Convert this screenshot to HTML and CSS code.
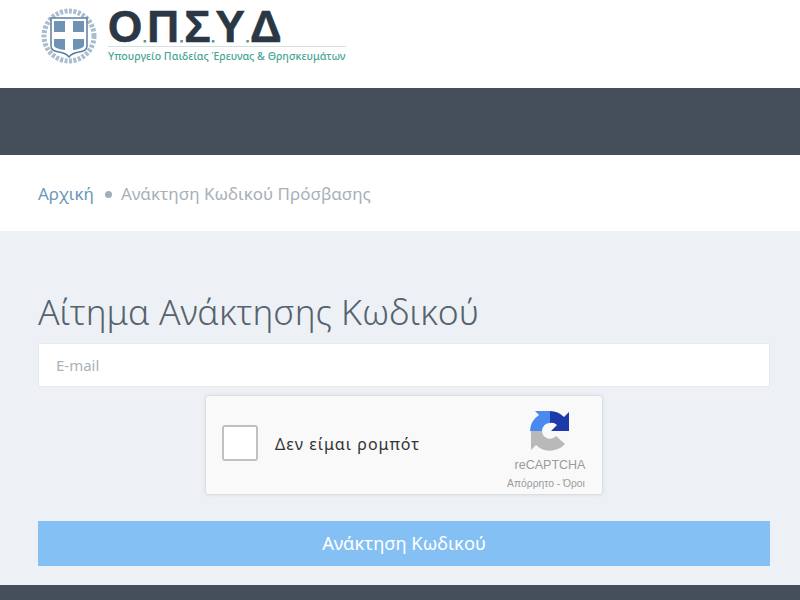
FILE: index.html
```html
<!DOCTYPE html>
<html lang="el">
<head>
    <meta charset="UTF-8">
    <meta name="viewport" content="width=device-width, initial-scale=1.0">
    <title>Ανάκτηση Κωδικού</title>
    <link rel="stylesheet" href="styles.css">
</head>
<body>
    <header class="site-header">
        <svg class="emblem" width="58" height="60" viewBox="0 0 58 60">
            <circle cx="29" cy="30" r="25" fill="none" stroke="#a9bdcf" stroke-width="5" stroke-dasharray="3 1.5"/>
            <path d="M11 12H47V40Q47 45 39 46Q32 47 29 51Q26 47 19 46Q11 45 11 40Z" fill="#fff" stroke="#5d7f9f" stroke-width="1.5"/>
            <path d="M14 15H25V26H14ZM33 15H44V26H33ZM14 33H25V44Q16 43 14 40ZM33 33H44V40Q42 43 33 44Z" fill="#6f93b5"/>
        </svg>
        <div class="brand">
            <div class="brand-name">Ο<i>.</i>Π<i>.</i>Σ<i>.</i>Υ<i>.</i>Δ</div>
            <div class="brand-sub">Υπουργείο Παιδείας Έρευνας &amp; Θρησκευμάτων</div>
        </div>
    </header>
    <div class="nav-bar"></div>
    <nav class="breadcrumb">
        <a href="#">Αρχική</a>
        <span class="dot"></span>
        <span class="current">Ανάκτηση Κωδικού Πρόσβασης</span>
    </nav>
    <main class="content">
        <h1>Αίτημα Ανάκτησης Κωδικού</h1>
        <form class="recover-form">
            <input type="text" placeholder="E-mail">
            <div class="captcha">
                <div class="captcha-box"></div>
                <div class="captcha-label">Δεν είμαι ρομπότ</div>
                <div class="captcha-logo">
                    <svg width="42" height="42" viewBox="0 0 42 42">
                        <path d="M1 21A20 20 0 0 1 10 5L6 1H21V13A8 8 0 0 0 13 21Z" fill="#4a8af0"/>
                        <path d="M21 1A20 20 0 0 1 35 7L40 2V21H22L28 15A8 8 0 0 0 21 13Z" fill="#1c3aa9"/>
                        <path d="M1 21H13A8 8 0 0 0 27 26L36 34A20 20 0 0 1 7 35L2 40V21Z" fill="#b9b9b9"/>
                    </svg>
                    <div class="captcha-name">reCAPTCHA</div>
                    <div class="captcha-terms">Απόρρητο - Όροι</div>
                </div>
            </div>
            <button type="submit">Ανάκτηση Κωδικού</button>
        </form>
    </main>
    <footer class="site-footer"></footer>
</body>
</html>
```

FILE: styles.css
```css
body {
    font-family: "Noto Sans", "Open Sans", sans-serif;
    margin: 0;
    background-color: #edf1f5;
    overflow: hidden;
}
.site-header {
    height: 88px;
    background-color: #fff;
    display: flex;
    align-items: flex-start;
    padding-left: 40px;
    box-sizing: border-box;
}
.emblem {
    margin-top: 6px;
}
.brand {
    margin-left: 10px;
    width: 238px;
}
.brand-name {
    font-family: "Liberation Sans", sans-serif;
    font-size: 44px;
    font-weight: bold;
    line-height: 38px;
    margin-top: 8px;
    color: #2a3744;
    -webkit-text-stroke: 0.6px #2a3744;
    white-space: nowrap;
    border-bottom: 1px solid #d5e0e0;
    height: 38px;
}
.brand-name i {
    font-style: normal;
    font-size: 11px;
    color: #3f9c8e;
    -webkit-text-stroke: 0.8px #3f9c8e;
    margin: 0 1px;
}
.brand-sub {
    font-size: 10.6px;
    font-weight: 500;
    line-height: 14px;
    margin-top: 2px;
    color: #4aa597;
    white-space: nowrap;
}
.nav-bar {
    height: 67px;
    background-color: #454f5b;
}
.breadcrumb {
    height: 76px;
    background-color: #fff;
    padding-left: 38px;
    display: flex;
    align-items: center;
    font-size: 17px;
    box-sizing: border-box;
}
.breadcrumb a {
    color: #6f97b8;
    text-decoration: none;
}
.dot {
    width: 7px;
    height: 7px;
    border-radius: 50%;
    background-color: #a3adb5;
    margin: 2px 9px 0 11px;
}
.current {
    color: #a7b0b8;
}
.content {
    height: 354px;
    padding: 58px 30px 0 38px;
    box-sizing: border-box;
}
h1 {
    font-size: 35.5px;
    font-weight: 300;
    line-height: 44px;
    margin: 0 0 10px;
    color: #56626d;
}
.recover-form {
    display: flex;
    flex-direction: column;
}
input[type="text"] {
    height: 44px;
    width: 100%;
    box-sizing: border-box;
    padding: 0 17px;
    border: 1px solid #e6eaee;
    background-color: #fff;
    font-family: inherit;
    font-size: 15px;
}
input::placeholder {
    color: #aab2ba;
}
.captcha {
    width: 398px;
    height: 100px;
    box-sizing: border-box;
    margin: 8px 0 26px 167px;
    background-color: #f9f9f9;
    border: 1px solid #dcdfe2;
    border-radius: 3px;
    box-shadow: 0 0 4px rgba(0, 0, 0, 0.08);
    display: flex;
    align-items: center;
    padding-left: 16px;
}
.captcha-box {
    width: 32px;
    height: 32px;
    margin-bottom: 5px;
    background-color: #fff;
    border: 2px solid #c1c1c1;
    border-radius: 3px;
}
.captcha-label {
    margin: 0 0 3px 17px;
    font-size: 16px;
    letter-spacing: 1px;
    color: #333;
}
.captcha-logo {
    margin: 14px 12px 0 auto;
    width: 80px;
    text-align: center;
    color: #9a9a9a;
}
.captcha-logo svg {
    display: block;
    margin: 0 auto 4px;
}
.captcha-name {
    font-family: "Liberation Sans", sans-serif;
    font-size: 12.5px;
    line-height: 18px;
    white-space: nowrap;
}
.captcha-terms {
    font-family: "Liberation Sans", sans-serif;
    font-size: 10.3px;
    line-height: 20px;
    margin: 0 4px 0 -4px;
    white-space: nowrap;
}
button {
    height: 45px;
    padding: 0 0 2px;
    background-color: #85c0f4;
    color: #fff;
    border: none;
    font-family: inherit;
    font-size: 18.3px;
    cursor: pointer;
}
.site-footer {
    height: 15px;
    background-color: #454f5b;
}
```
